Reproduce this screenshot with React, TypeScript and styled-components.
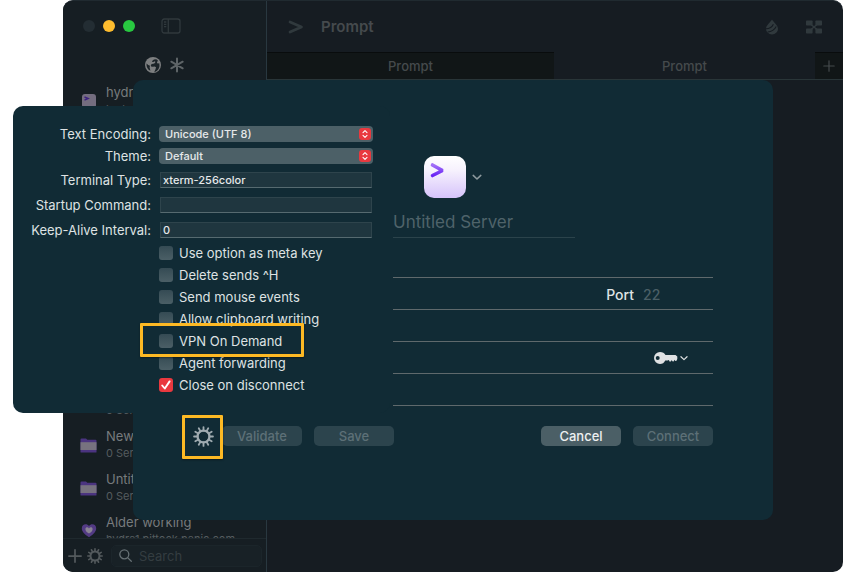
import React from "react";
import styled, { createGlobalStyle, css } from "styled-components";

const GlobalStyle = createGlobalStyle`
  *, *::before, *::after { box-sizing: border-box; }
  body { margin: 0; background: #ffffff; }
  body, button, input, select { font-family: Inter, "Liberation Sans", sans-serif; }
  button, input, select { margin: 0; padding: 0; border: 0; background: none; outline: none; }
  ul { margin: 0; padding: 0; list-style: none; }
  svg { display: block; flex: none; }
`;

const panelColor = "#112b35";
const amber = "#fdb924";

const Desktop = styled.div`
  position: relative;
  min-height: 100vh;
  padding-left: 63px;
  overflow: hidden;
  display: flex;
`;

const Window = styled.main`
  position: relative;
  flex: 1;
  display: grid;
  grid-template-columns: 204px 1fr;
  height: 100vh;
  background: #161c22;
  border-radius: 10px;
  border-top: 1px solid #202a30;
  overflow: hidden;
`;

/* Sidebar */

const Sidebar = styled.aside`
  display: flex;
  flex-direction: column;
  min-height: 0;
  background: #161e23;
  border-right: 1px solid #293840;
`;

const TrafficBar = styled.div`
  display: flex;
  align-items: center;
  gap: 8px;
  height: 50px;
  padding-left: 20px;
`;

const TrafficLight = styled.button<{ $color: string }>`
  width: 12px;
  height: 12px;
  border-radius: 50%;
  background: ${(p) => p.$color};
`;

const IconButton = styled.button<{ $color?: string }>`
  display: flex;
  align-items: center;
  justify-content: center;
  color: ${(p) => p.$color ?? "#30393d"};
`;

const ToggleSlot = styled.div`
  margin-left: 18px;
`;

const FilterBar = styled.div`
  display: flex;
  align-items: center;
  justify-content: center;
  gap: 8px;
  height: 27px;
`;

const ServerList = styled.div`
  flex: 1;
  min-height: 0;
  display: flex;
  flex-direction: column;
  overflow: hidden;
`;

const ServerGroup = styled.ul<{ $end?: boolean }>`
  margin-top: ${(p) => (p.$end ? "258px" : "0")};
`;

const ServerRow = styled.li`
  display: flex;
  align-items: center;
  gap: 9px;
  height: 43px;
  padding-left: 17px;
`;

const ServerIcon = styled.span`
  flex: none;
  width: 17px;
  margin-top: 2px;
  display: flex;
  justify-content: center;
`;

const ServerText = styled.div`
  display: flex;
  flex-direction: column;
  white-space: nowrap;
`;

const ServerName = styled.span`
  font-size: 13px;
  line-height: 18px;
  color: #777b7d;
`;

const ServerDetail = styled.span`
  font-size: 11px;
  line-height: 16px;
  color: #555c5f;
`;

const SidebarFooter = styled.footer`
  display: flex;
  align-items: center;
  height: 34px;
  padding: 0 4px 0 5px;
  gap: 5px;
  border-top: 1px solid #1f292e;
`;

const SearchBox = styled.label`
  flex: 1;
  min-width: 0;
  display: flex;
  align-items: center;
  gap: 7px;
  height: 22px;
  margin-left: 3px;
  padding-left: 7px;
  border: 1px solid #1b252a;
  border-radius: 5px;
  background: #182126;
  color: #667074;
`;

const SearchInput = styled.input`
  flex: 1;
  min-width: 0;
  font-size: 13px;
  line-height: 20px;
  color: #777b7d;
  &::placeholder { color: #343d41; opacity: 1; }
`;

/* Main pane */

const Pane = styled.section`
  display: flex;
  flex-direction: column;
`;

const Toolbar = styled.header`
  display: flex;
  align-items: center;
  height: 51px;
  padding: 0 21px;
  color: #30393d;
`;

const Title = styled.h1`
  flex: 1;
  margin: 0 0 0 17px;
  font-size: 15px;
  line-height: 20px;
  font-weight: 600;
  color: #454a4d;
`;

const ToolGroup = styled.div`
  display: flex;
  align-items: center;
  gap: 27px;
`;

const Tabs = styled.nav`
  display: grid;
  grid-template-columns: 11fr 10fr 28px;
  height: 28px;
  border-bottom: 1px solid #293538;
`;

const Tab = styled.button<{ $dark?: boolean }>`
  display: flex;
  align-items: center;
  justify-content: center;
  font-size: 13px;
  font-weight: 500;
  color: #454a4c;
  ${(p) =>
    p.$dark &&
    css`
      background: #111617;
      border-top: 1px solid #090c0d;
    `}
`;

/* Server sheet */

const Sheet = styled.section`
  position: absolute;
  top: 79px;
  left: 50%;
  width: 640px;
  margin-left: -320px;
  padding: 76px 60px 74px;
  background: ${panelColor};
  border-radius: 10px;
`;

const SheetForm = styled.div`
  margin-left: 200px;
`;

const AppIconPicker = styled.button`
  display: flex;
  align-items: center;
  gap: 4px;
  margin-left: 29px;
  color: #8e9a9e;
`;

const AppTile = styled.span`
  display: block;
  width: 46px;
  height: 42px;
  padding: 0 2px;
`;

const NameInput = styled.input`
  display: block;
  width: 182px;
  height: 32px;
  margin: 8px 0;
  border-bottom: 1px solid #2b434b;
  font-size: 17px;
  color: #dfe3e4;
  &::placeholder { color: #4f636a; opacity: 1; }
`;

const FieldRow = styled.div`
  display: flex;
  align-items: center;
  justify-content: flex-end;
  height: 32px;
  border-bottom: 1px solid #5f696c;
`;

const PortLabel = styled.label`
  display: flex;
  align-items: center;
  gap: 9px;
  padding-top: 2px;
  font-size: 14px;
  font-weight: 500;
  color: #dfe3e4;
`;

const PortInput = styled.input`
  width: 70px;
  font-size: 14px;
  font-weight: 500;
  color: #dfe3e4;
  &::placeholder { color: #4b5f66; opacity: 1; }
`;

const LineInput = styled.input`
  flex: 1;
  min-width: 0;
  font-size: 14px;
  color: #dfe3e4;
`;

const KeyButton = styled.button`
  display: flex;
  align-items: center;
  gap: 2px;
  margin-right: 25px;
  color: #dfe1e3;
`;

const ButtonRow = styled.div`
  display: flex;
  align-items: center;
  gap: 12px;
  margin-top: 20px;
`;

const Spacer = styled.span`
  flex: 1;
`;

const PushButton = styled.button<{ $active?: boolean }>`
  width: 80px;
  height: 20px;
  border-radius: 5px;
  font-size: 13px;
  font-weight: 500;
  color: ${(p) => (p.$active ? "#eef0f1" : "#5d7077")};
  background: ${(p) => (p.$active ? "#4b5f66" : "#2c444d")};
`;

const Highlight = styled.span<{ $inset: string }>`
  position: absolute;
  z-index: 1;
  inset: ${(p) => p.$inset};
  border: 3px solid ${amber};
  border-radius: 1px;
  box-shadow: 0 1px 2px rgba(0, 0, 0, 0.4);
  pointer-events: none;
`;

const GearButton = styled.button`
  position: relative;
  width: 21px;
  height: 20px;
  margin-right: -4px;
  display: flex;
  align-items: center;
  justify-content: center;
  color: #9fabb0;
`;

/* Advanced options popover */

const Popover = styled.section`
  position: absolute;
  top: 106px;
  left: 13px;
  width: 377px;
  padding: 17px 17px 17px 10px;
  background: ${panelColor};
  border-radius: 10px;
`;

const FormRow = styled.div<{ $tall?: boolean }>`
  display: grid;
  grid-template-columns: 128px 1fr;
  column-gap: 8px;
  align-items: center;
  height: ${(p) => (p.$tall ? "25px" : "22px")};
`;

const FormLabel = styled.label`
  font-size: 13px;
  line-height: 18px;
  text-align: right;
  white-space: nowrap;
  color: #dee2e3;
`;

const SelectWrap = styled.div`
  display: grid;
  align-items: center;
  height: 16px;
  border-radius: 4px;
  background: #4c6067;
  & > * { grid-area: 1 / 1; }
`;

const Select = styled.select`
  appearance: none;
  width: 100%;
  height: 16px;
  padding: 0 20px 0 6px;
  font-size: 11px;
  font-weight: 500;
  line-height: 16px;
  color: #e6e9ea;
`;

const StepBadge = styled.span`
  justify-self: end;
  display: flex;
  align-items: center;
  justify-content: center;
  width: 12px;
  height: 12px;
  margin-right: 2px;
  border-radius: 3px;
  background: #e9393f;
  pointer-events: none;
`;

const FieldWrap = styled.div`
  display: flex;
  padding: 0 1px;
`;

const TextField = styled.input`
  width: 100%;
  height: 16px;
  padding: 0 2px;
  font-size: 11px;
  font-weight: 500;
  color: #e6e9ea;
  background: #1f363f;
  border: 1px solid #2e444c;
  border-bottom-color: #566a70;
`;

const CheckRow = styled.label`
  position: relative;
  display: flex;
  align-items: center;
  gap: 6px;
  height: 22px;
  width: max-content;
  margin-left: 136px;
  font-size: 13px;
  color: #dee2e3;
`;

const CheckGrid = styled.span`
  display: grid;
  place-items: center;
  & > * { grid-area: 1 / 1; }
  & > svg { visibility: hidden; pointer-events: none; }
  & > input:checked + svg { visibility: visible; }
`;

const CheckInput = styled.input`
  appearance: none;
  width: 14px;
  height: 14px;
  border-radius: 3px;
  background: linear-gradient(#354b54, #4b5f66);
  &:checked { background: #e9393f; }
`;

/* Icons */

function Gear({ size, stroke }: { size: number; stroke: number }) {
  const teeth = Array.from({ length: 12 }, (_, i) => i * 30);
  return (
    <svg width={size} height={size} viewBox="0 0 24 24" fill="none" stroke="currentColor" strokeWidth={stroke}>
      <circle cx="12" cy="12" r="6.800" />
      {teeth.map((a) => (
        <path key={a} d="M12 1.200v4" strokeLinecap="round" strokeWidth={stroke * 0.8} transform={`rotate(${a} 12 12)`} />
      ))}
    </svg>
  );
}

function Chevron({ width }: { width: number }) {
  return (
    <svg width={width} height={width} viewBox="0 0 10 10" fill="none" stroke="currentColor" strokeWidth="1.5" strokeLinecap="round" strokeLinejoin="round">
      <path d="M1.2 3.4 5 7l3.800-3.600" />
    </svg>
  );
}

function Globe() {
  return (
    <svg width="16" height="16" viewBox="0 0 16 16">
      <circle cx="8" cy="8" r="8" fill="#7d7f80" />
      <path
        fill="#1c2428"
        d="M11.200 2.200 9 2.600 7.400 3.700l-.5 1.100 1.500.2 1-.8 1 .5-.4 1.200-1.500.9-1.600.3-1.100 1 .3 1.300 1.700.3 1.900-.3 1.300.9-.4 1.700-1.300 2.900c3-.7 5.200-3.300 5.200-6.500 0-.8-.2-1.600-.4-2.300l-1.100.6-1-.9.3-1.500 1-.1c-.6-.9-1.300-1.500-2.100-2Z"
      />
      <path fill="#1c2428" d="m1.600 6.500 1.600 1.400 1.800.9-.4 1.700.8 3.200C3 12.700 1.200 10 1.600 6.500Z" />
    </svg>
  );
}

function Asterisk() {
  return (
    <svg width="16" height="16" viewBox="0 0 16 16" stroke="#5e6467" strokeWidth="2" strokeLinecap="round">
      <path d="M8 1.500v13M2.300 4.700l11.400 6.600M13.700 4.700 2.300 11.300" />
    </svg>
  );
}

function SidebarToggle() {
  return (
    <svg width="20" height="16" viewBox="0 0 20 16" fill="none" stroke="currentColor" strokeWidth="1.300">
      <rect x="1" y="1" width="18" height="14" rx="2.200" />
      <path d="M7.300 1v14M3 4h2.300M3 6.300h2.300M3 8.600h2.300" />
    </svg>
  );
}

function PromptArrow() {
  return (
    <svg width="16" height="14" viewBox="0 0 16 14" fill="none" stroke="currentColor" strokeWidth="2.700" strokeLinecap="round" strokeLinejoin="round">
      <path d="M2 2 13.500 7 2 12" />
    </svg>
  );
}

function Drop() {
  return (
    <svg width="14" height="16" viewBox="0 0 14 16">
      <path fill="currentColor" d="M7 .5c2 3.200 6 5.800 6 9.400a6 5.600 0 0 1-12 0C1 6.300 5 3.700 7 .5Z" />
      <path d="M1 9.800c3.600-.2 6.200-2 7.400-4.600M2.600 13c3.800-.2 7-2.200 8.600-5.400" fill="none" stroke="#161c22" strokeWidth="1.100" />
    </svg>
  );
}

function Clips() {
  return (
    <svg width="16" height="14" viewBox="0 0 16 14" fill="currentColor">
      <rect x="0" y=".5" width="6.600" height="5" rx=".7" />
      <rect x="9.400" y=".5" width="6.600" height="5" rx=".7" />
      <rect x="0" y="8.500" width="6.600" height="5" rx=".7" />
      <rect x="9.400" y="8.500" width="6.600" height="5" rx=".7" />
      <path d="m5 4.500 6 5M11 4.500l-6 5" stroke="currentColor" strokeWidth="1.500" />
    </svg>
  );
}

function Plus({ size, stroke }: { size: number; stroke: number }) {
  return (
    <svg width={size} height={size} viewBox="0 0 12 12" stroke="currentColor" strokeWidth={stroke} strokeLinecap="round">
      <path d="M6 .8v10.400M.8 6h10.400" />
    </svg>
  );
}

function Folder() {
  return (
    <svg width="17" height="16" viewBox="0 0 17 16">
      <path fill="#4b3480" d="M.5 2.500Q.5 1.500 1.500 1.500H6l1.300 1.300h8.200q1 0 1 1V15q0 .5-.5.5H1q-.5 0-.5-.5Z" />
      <path fill="#77727f" d="M.5 5.200h16v7.800H.5Z" />
    </svg>
  );
}

function Heart() {
  return (
    <svg width="16" height="15" viewBox="0 0 16 15">
      <path fill="#533b84" d="M8 14.300C3 10.800.8 8.400.8 5.200.8 1 5.800-.2 8 3c2.200-3.200 7.200-2 7.200 2.200 0 3.200-2.200 5.600-7.200 9.100Z" />
      <path fill="#8a8494" d="M8 10.600C5.500 9 4.400 7.700 4.400 6.200c0-2 2.500-2.500 3.600-.8 1.100-1.700 3.600-1.200 3.600.8 0 1.500-1.100 2.800-3.600 4.400Z" />
    </svg>
  );
}

function SmallTile() {
  return (
    <svg width="14" height="16" viewBox="0 0 14 16">
      <rect width="14" height="14" y="1" rx="3" fill="#746d7f" />
      <path d="m2.500 4 3.700 1.500L2.500 7.200" fill="none" stroke="#3c2180" strokeWidth="1.400" />
    </svg>
  );
}

function AppIcon() {
  return (
    <svg width="42" height="42" viewBox="0 0 42 42">
      <defs>
        <linearGradient id="tile" x1="0" y1="0" x2="0" y2="1">
          <stop offset="0" stopColor="#ffffff" />
          <stop offset=".35" stopColor="#f6f1fd" />
          <stop offset="1" stopColor="#d6c3fb" />
        </linearGradient>
        <linearGradient id="arrow" x1="0" y1="0" x2="0" y2="1">
          <stop offset="0" stopColor="#a271f7" />
          <stop offset="1" stopColor="#6a24f5" />
        </linearGradient>
      </defs>
      <rect width="42" height="42" rx="10" fill="url(#tile)" />
      <path d="M8.500 9 18.500 14.500l-10 5" fill="none" stroke="url(#arrow)" strokeWidth="3.600" strokeLinecap="round" strokeLinejoin="bevel" />
    </svg>
  );
}

function Key() {
  return (
    <svg width="24" height="12" viewBox="0 0 24 12">
      <path fill="currentColor" fillRule="evenodd" d="M6 0c2.500 0 4.600 1.300 5.500 3H21.500L23.300 4.500v2.600l-.8 1.700-1.200.1-.7-1.200-1 1.700-1.300-.1-.5-1.300-1 1.500-1.300-.1-.6-1.300L13.700 8.500H11.200C10.200 11 8.300 12 6 12A6 6 0 0 1 6 0ZM3.700 4a2 2 0 1 0 0 4 2 2 0 0 0 0-4Z" />
    </svg>
  );
}

function Magnifier() {
  return (
    <svg width="13" height="13" viewBox="0 0 13 13" fill="none" stroke="currentColor" strokeWidth="1.300" strokeLinecap="round">
      <circle cx="5.300" cy="5.300" r="4.500" />
      <path d="m8.600 8.600 3.700 3.700" />
    </svg>
  );
}

function Steppers() {
  return (
    <svg width="8" height="10" viewBox="0 0 8 10" fill="none" stroke="#fff" strokeWidth="1.100" strokeLinecap="round" strokeLinejoin="round">
      <path d="M2 3.600 4 1.700l2 1.900M2 6.400l2 1.900 2-1.900" />
    </svg>
  );
}

function Tick() {
  return (
    <svg width="14" height="14" viewBox="0 0 14 14" fill="none" stroke="#fff" strokeWidth="1.900" strokeLinecap="round" strokeLinejoin="round">
      <path d="m3.200 7.500 2.600 3L10.600 3.400" />
    </svg>
  );
}

interface Server {
  name: string;
  detail: string;
  icon: React.ReactNode;
}

const topServers: Server[] = [{ name: "hydra1", detail: "hydra1.pittock.panic.com", icon: <SmallTile /> }];

const lowerServers: Server[] = [
  { name: "New Group", detail: "0 Servers", icon: <Folder /> },
  { name: "New Group", detail: "0 Servers", icon: <Folder /> },
  { name: "Untitled", detail: "0 Servers", icon: <Folder /> },
  { name: "Alder working", detail: "hydra1.pittock.panic.com", icon: <Heart /> },
];

const options = [
  { label: "Use option as meta key" },
  { label: "Delete sends ^H" },
  { label: "Send mouse events" },
  { label: "Allow clipboard writing" },
  { label: "VPN On Demand", highlighted: true },
  { label: "Agent forwarding" },
  { label: "Close on disconnect", checked: true },
];

function Servers({ items, end }: { items: Server[]; end?: boolean }) {
  return (
    <ServerGroup $end={end}>
      {items.map((s, i) => (
        <ServerRow key={i}>
          <ServerIcon>{s.icon}</ServerIcon>
          <ServerText>
            <ServerName>{s.name}</ServerName>
            <ServerDetail>{s.detail}</ServerDetail>
          </ServerText>
        </ServerRow>
      ))}
    </ServerGroup>
  );
}

function SelectField({ id, label, value }: { id: string; label: string; value: string }) {
  return (
    <FormRow>
      <FormLabel htmlFor={id}>{label}</FormLabel>
      <SelectWrap>
        <Select id={id} defaultValue={value}>
          <option>{value}</option>
        </Select>
        <StepBadge>
          <Steppers />
        </StepBadge>
      </SelectWrap>
    </FormRow>
  );
}

function InputField({ id, label, value }: { id: string; label: string; value: string }) {
  return (
    <FormRow $tall>
      <FormLabel htmlFor={id}>{label}</FormLabel>
      <FieldWrap>
        <TextField id={id} defaultValue={value} />
      </FieldWrap>
    </FormRow>
  );
}

export default function App() {
  return (
    <Desktop>
      <GlobalStyle />
      <Window>
        <Sidebar>
          <TrafficBar>
            <TrafficLight $color="#232d33" aria-label="Close" />
            <TrafficLight $color="#febc2e" aria-label="Minimize" />
            <TrafficLight $color="#28c840" aria-label="Zoom" />
            <ToggleSlot>
              <IconButton aria-label="Toggle sidebar">
                <SidebarToggle />
              </IconButton>
            </ToggleSlot>
          </TrafficBar>
          <FilterBar>
            <IconButton aria-label="All servers">
              <Globe />
            </IconButton>
            <IconButton aria-label="Favorites">
              <Asterisk />
            </IconButton>
          </FilterBar>
          <ServerList>
            <Servers items={topServers} />
            <Servers items={lowerServers} end />
          </ServerList>
          <SidebarFooter>
            <IconButton $color="#53595c" aria-label="Add server">
              <Plus size={14} stroke={1.5} />
            </IconButton>
            <IconButton $color="#53595c" aria-label="Server settings">
              <Gear size={16} stroke={3} />
            </IconButton>
            <SearchBox>
              <Magnifier />
              <SearchInput placeholder="Search" aria-label="Search" />
            </SearchBox>
          </SidebarFooter>
        </Sidebar>

        <Pane>
          <Toolbar>
            <PromptArrow />
            <Title>Prompt</Title>
            <ToolGroup>
              <IconButton aria-label="Theme">
                <Drop />
              </IconButton>
              <IconButton aria-label="Clips">
                <Clips />
              </IconButton>
            </ToolGroup>
          </Toolbar>
          <Tabs>
            <Tab $dark>Prompt</Tab>
            <Tab>Prompt</Tab>
            <Tab $dark aria-label="New tab">
              <Plus size={12} stroke={1.2} />
            </Tab>
          </Tabs>
        </Pane>

        <Sheet>
          <SheetForm>
            <AppIconPicker aria-label="Choose icon">
              <AppTile>
                <AppIcon />
              </AppTile>
              <Chevron width={10} />
            </AppIconPicker>
            <NameInput placeholder="Untitled Server" aria-label="Server name" />
            <FieldRow>
              <LineInput aria-label="Protocol" />
            </FieldRow>
            <FieldRow>
              <LineInput aria-label="Address" />
              <PortLabel>
                Port
                <PortInput placeholder="22" />
              </PortLabel>
            </FieldRow>
            <FieldRow>
              <LineInput aria-label="User" />
            </FieldRow>
            <FieldRow>
              <LineInput aria-label="Password" />
              <KeyButton aria-label="Choose key">
                <Key />
                <Chevron width={8} />
              </KeyButton>
            </FieldRow>
            <FieldRow>
              <LineInput aria-label="Jump host" />
            </FieldRow>
          </SheetForm>
          <ButtonRow>
            <GearButton aria-label="Advanced options">
              <Gear size={21} stroke={2.6} />
              <Highlight $inset="-11px -9px -13px -11px" />
            </GearButton>
            <PushButton disabled>Validate</PushButton>
            <PushButton disabled>Save</PushButton>
            <Spacer />
            <PushButton $active>Cancel</PushButton>
            <PushButton disabled>Connect</PushButton>
          </ButtonRow>
        </Sheet>
      </Window>

      <Popover>
        <SelectField id="encoding" label="Text Encoding:" value="Unicode (UTF 8)" />
        <SelectField id="theme" label="Theme:" value="Default" />
        <InputField id="terminal" label="Terminal Type:" value="xterm-256color" />
        <InputField id="startup" label="Startup Command:" value="" />
        <InputField id="keepalive" label="Keep-Alive Interval:" value="0" />
        {options.map((o) => (
          <CheckRow key={o.label}>
            <CheckGrid>
              <CheckInput type="checkbox" defaultChecked={o.checked} />
              <Tick />
            </CheckGrid>
            {o.label}
            {o.highlighted && <Highlight $inset="-7px -22px -5px -19px" />}
          </CheckRow>
        ))}
      </Popover>
    </Desktop>
  );
}
